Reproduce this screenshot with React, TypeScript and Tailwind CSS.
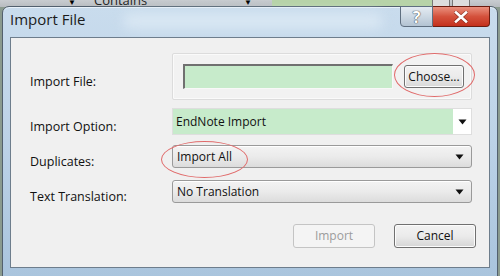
import React from "react";

const font = { fontFamily: '"Open Sans", "Noto Sans", "Liberation Sans", sans-serif' };

function Arrow() {
  return (
    <svg width="9" height="6" viewBox="0 0 9 6" className="shrink-0">
      <path d="M0.5 0.5 H8.5 L4.5 5.5 Z" fill="#111" />
    </svg>
  );
}

function Combo({ text }: { text: string }) {
  return (
    <div className="flex items-center justify-between h-full rounded-[3px] border border-[#9a9a9a] bg-gradient-to-b from-[#f3f3f3] via-[#ebebeb] to-[#dcdcdc] pl-[4px] pr-[7px] shadow-[inset_0_1px_0_#ffffff]">
      <span className="text-[12px] text-[#111] leading-none">{text}</span>
      <Arrow />
    </div>
  );
}

const label = "w-[161px] pl-[19px] translate-y-[5px] text-[12.5px] leading-[16px] text-[#111]";

export default function App() {
  return (
    <div className="w-[500px] h-[276px] overflow-hidden bg-[#8a9a8e] relative" style={font}>
      {/* background app strip */}
      <div className="h-[7px] bg-gradient-to-b from-[#c8ccd0] to-[#b8bcc0] relative overflow-hidden">
        <div className="absolute left-[68px] top-[-2px] text-[8px] leading-none">▼</div>
        <div className="absolute left-[94px] top-[-6px] text-[13px] leading-none text-[#222]">Contains</div>
        <div className="absolute left-[244px] top-[-2px] text-[8px] leading-none">▼</div>
        <div className="absolute left-[272px] top-0 w-[160px] h-[7px] bg-[#b7d3a8]" />
        <div className="absolute left-[432px] top-0 w-[18px] h-[7px] border-x border-[#777] bg-[#ddd]" />
        <div className="absolute left-[452px] top-0 w-[18px] h-[7px] border-x border-[#777] bg-[#ddd]" />
      </div>
      {/* window */}
      <div className="absolute left-[2px] top-[6px] w-[496px] h-[272px] rounded-t-[7px] border border-[#52606e] bg-gradient-to-b from-[#c9dced] via-[#bcd2e7] to-[#a9c4dd] flex flex-col shadow-[inset_0_1px_0_#e8f1f9]">
        {/* title bar */}
        <div className="h-[30px] flex items-start justify-between pl-[7px] relative">
          <div className="absolute left-[120px] top-[6px] w-[260px] h-[16px] rounded-full bg-[#d9e7f3] blur-[6px]" />
          <span className="relative text-[15px] text-[#1b1b1b] mt-[1px]">Import File</span>
          <div className="relative flex mr-[7px] -mt-[1px]">
            <div className="w-[33px] h-[21px] rounded-bl-[4px] border border-[#5f6f80] bg-gradient-to-b from-[#e4ebf2] via-[#ccd8e3] to-[#b3c3d2] flex items-center justify-center text-[16px] font-bold text-white [text-shadow:0_0_1px_#333,0_0_1px_#333] leading-none">
              ?
            </div>
            <div className="w-[57px] h-[21px] rounded-br-[4px] border border-l-0 border-[#6b1c10] bg-gradient-to-b from-[#e9907e] via-[#d4513c] to-[#c4301c] flex items-center justify-center">
              <svg width="14" height="12" viewBox="0 0 14 12">
                <path d="M2 1.5 L12 10.5 M12 1.5 L2 10.5" stroke="#5a1a10" strokeWidth="4" strokeLinecap="square" opacity="0.5" />
                <path d="M2 1.5 L12 10.5 M12 1.5 L2 10.5" stroke="#fff" strokeWidth="2.6" strokeLinecap="square" />
              </svg>
            </div>
          </div>
        </div>
        {/* client */}
        <div className="mx-[7px] h-[231px] border border-[#6d7d8c] bg-[#f0f0f0] relative flex flex-col pt-[15px]">
          {/* row 1 */}
          <div className="flex items-center">
            <div className={label}>Import File:</div>
            <div className="w-[300px] h-[47px] border border-[#dcdcdc] bg-[#f2f2f2] rounded-[2px] shadow-[inset_0_0_0_1px_#fafafa] flex items-center pl-[10px] gap-[11px]">
              <div className="w-[210px] h-[25px] bg-[#c7ebcb] border-t-2 border-l-2 border-[#707070] border-b border-b-[#f8f8f8] border-r border-r-[#f8f8f8]" />
              <div className="w-[60px] h-[23px] rounded-[3px] border border-[#707070] bg-gradient-to-b from-[#f2f2f2] via-[#ebebeb] to-[#d8d8d8] shadow-[inset_0_0_0_1px_#fcfcfc] flex items-center justify-center text-[12px] text-[#111]">
                Choose...
              </div>
            </div>
          </div>
          {/* row 2 */}
          <div className="flex items-center mt-[8px]">
            <div className={label}>Import Option:</div>
            <div className="w-[300px] h-[27px] border border-[#dedede] bg-white flex items-stretch">
              <div className="w-[280px] bg-[#c7ebcb] flex items-center pl-[3px] text-[12px] text-[#111]">EndNote Import</div>
              <div className="flex-1 flex items-center justify-center"><Arrow /></div>
            </div>
          </div>
          {/* row 3 */}
          <div className="flex items-center mt-[10px]">
            <div className={label}>Duplicates:</div>
            <div className="w-[300px] h-[23px]"><Combo text="Import All" /></div>
          </div>
          {/* row 4 */}
          <div className="flex items-center mt-[12px]">
            <div className={label}>Text Translation:</div>
            <div className="w-[300px] h-[23px]"><Combo text="No Translation" /></div>
          </div>
          {/* buttons */}
          <div className="flex justify-end gap-[19px] mt-[21px] pr-[13px]">
            <div className="w-[82px] h-[24px] rounded-[3px] border border-[#c4c4c4] bg-[#f4f4f4] flex items-center justify-center text-[12px] text-[#9c9c9c]">
              Import
            </div>
            <div className="w-[82px] h-[24px] rounded-[3px] border border-[#707070] bg-gradient-to-b from-[#f2f2f2] via-[#ebebeb] to-[#d6d6d6] shadow-[inset_0_0_0_1px_#fcfcfc] flex items-center justify-center text-[12px] text-[#111]">
              Cancel
            </div>
          </div>
          {/* red annotation ellipses */}
          <div className="absolute left-[383px] top-[15px] w-[81px] h-[44px] rounded-[50%] border border-[#e06a6a] pointer-events-none" />
          <div className="absolute left-[150px] top-[103px] w-[87px] h-[37px] rounded-[50%] border border-[#e06a6a] pointer-events-none" />
        </div>
      </div>
    </div>
  );
}
